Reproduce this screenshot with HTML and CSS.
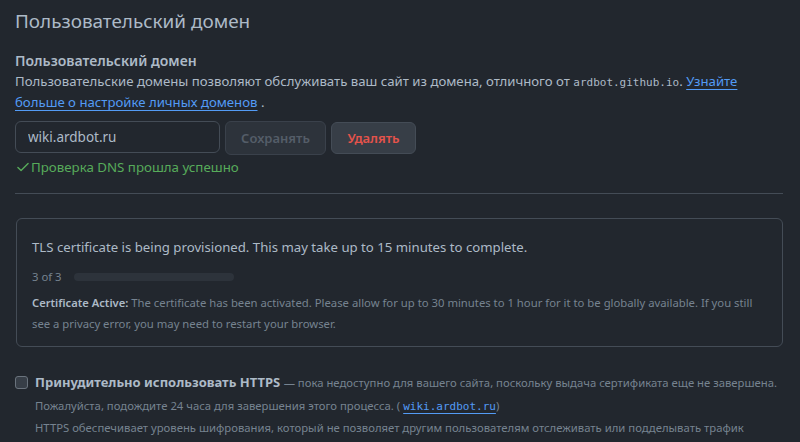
FILE: index.html
```html
<!DOCTYPE html>
<html lang="ru">
<head>
<meta charset="utf-8">
<link rel="stylesheet" href="styles.css">
</head>
<body>
<div class="page">
  <h2 class="title">Пользовательский домен</h2>
  <div class="field">
    <div class="label">Пользовательский домен</div>
    <p class="desc">Пользовательские домены позволяют обслуживать ваш сайт из домена, отличного от <code>ardbot.github.io</code>. <a href="#">Узнайте больше о настройке личных доменов</a> .</p>
    <div class="form-row">
      <input class="input" type="text" value="wiki.ardbot.ru">
      <button class="btn btn-disabled" type="button">Сохранять</button>
      <button class="btn btn-danger" type="button">Удалять</button>
    </div>
    <div class="success"><svg class="check" viewBox="0 0 16 16" width="14" height="14"><path d="M2.2 8.6 L5.8 12.1 L13.8 3.9" fill="none" stroke="currentColor" stroke-width="1.6" stroke-linecap="round" stroke-linejoin="round"/></svg>Проверка DNS прошла успешно</div>
  </div>
  <hr class="divider">
  <div class="box">
    <div class="box-title">TLS certificate is being provisioned. This may take up to 15 minutes to complete.</div>
    <div class="progress-row">
      <span class="step">3 of 3</span>
      <span class="bar"></span>
    </div>
    <p class="note"><strong>Certificate Active:</strong> The certificate has been activated. Please allow for up to 30 minutes to 1 hour for it to be globally available. If you still see a privacy error, you may need to restart your browser.</p>
  </div>
  <div class="https">
    <span class="checkbox"></span>
    <div class="https-text">
      <div class="https-head"><strong>Принудительно использовать HTTPS</strong> <span class="muted">— пока недоступно для вашего сайта, поскольку выдача сертификата еще не завершена.</span></div>
      <div class="muted line first">Пожалуйста, подождите 24 часа для завершения этого процесса. ( <a class="mono" href="#">wiki.ardbot.ru</a>)</div>
      <div class="muted line">HTTPS обеспечивает уровень шифрования, который не позволяет другим пользователям отслеживать или подделывать трафик вашего сайта.</div>
    </div>
  </div>
</div>
</body>
</html>
```
FILE: styles.css
```css
html, body {
  margin: 0;
  padding: 0;
  background: #22272e;
  overflow: hidden;
}
body {
  font-family: "Noto Sans", "Open Sans", sans-serif;
  color: #adbac7;
  font-size: 13.2px;
  line-height: 21px;
}
.page {
  width: 768px;
  padding: 5px 0 0 15px;
}
.title {
  margin: 0;
  font-size: 18.9px;
  font-weight: 400;
  line-height: 32px;
  color: #adbac7;
}
.field {
  margin-top: 14px;
}
.label {
  font-weight: 600;
  font-size: 14px;
  line-height: 20px;
  color: #adbac7;
}
.desc {
  margin: 0;
  width: 740px;
  font-size: 13.2px;
  line-height: 21px;
}
.desc code, .mono {
  font-family: "DejaVu Sans Mono", "Liberation Mono", monospace;
  font-size: 11px;
  line-height: 1;
}
a {
  color: #539bf5;
  text-decoration: underline;
  text-underline-offset: 3px;
}
.form-row {
  display: flex;
  align-items: center;
  gap: 5px;
  margin-top: 6px;
}
.input {
  box-sizing: border-box;
  width: 205px;
  height: 32px;
  background: #22272e;
  border: 1px solid #444c56;
  border-radius: 6px;
  padding: 0 12px;
  color: #adbac7;
  font-family: inherit;
  font-size: 13.5px;
  outline: none;
}
.btn {
  box-sizing: border-box;
  height: 32px;
  border-radius: 6px;
  border: 1px solid #444c56;
  background: #373e47;
  font-family: inherit;
  font-size: 13px;
  font-weight: 600;
  padding: 0;
  margin-top: 2px;
}
.btn-disabled {
  width: 101px;
  height: 34px;
  color: #545d68;
  background: #2d333b;
  border-color: #3a414b;
}
.btn-danger {
  width: 85px;
  color: #e5534b;
  margin-top: 1px;
}
.success {
  display: flex;
  align-items: center;
  margin-top: 2px;
  color: #57ab5a;
  font-size: 13.3px;
  line-height: 20px;
}
.check {
  margin-left: 1px;
  margin-right: 1px;
}
.divider {
  margin: 16px 0 0;
  border: 0;
  border-top: 1px solid #444c56;
}
.box {
  margin-top: 24px;
  margin-left: 1px;
  border: 1px solid #444c56;
  border-radius: 6px;
  padding: 16px 15px 12px;
}
.box-title {
  font-size: 13.2px;
  line-height: 24px;
  color: #adbac7;
}
.progress-row {
  display: flex;
  align-items: center;
  margin-top: 9px;
  font-size: 11.3px;
  line-height: 18px;
}
.step {
  color: #768390;
}
.bar {
  display: inline-block;
  width: 160px;
  height: 8px;
  margin-left: 12px;
  border-radius: 4px;
  background: #2d333b;
}
.note {
  margin: 6px 0 0;
  font-size: 11.3px;
  line-height: 21px;
  color: #768390;
}
.note strong {
  color: #adbac7;
  font-weight: 600;
  font-size: 11.2px;
}
.https {
  display: flex;
  align-items: flex-start;
  margin-top: 25px;
}
.checkbox {
  flex: none;
  box-sizing: border-box;
  width: 13px;
  height: 13px;
  margin-top: 4px;
  border: 1px solid #6a737d;
  border-radius: 3px;
  background: #373e47;
}
.https-text {
  margin-left: 7px;
}
.https-head {
  font-size: 13.4px;
  line-height: 21px;
}
.https-head strong {
  font-weight: 700;
  font-size: 13px;
  color: #adbac7;
}
.muted {
  color: #768390;
  font-size: 11.3px;
}
.line {
  line-height: 22px;
}
.line.first {
  margin-top: 2px;
}
```
